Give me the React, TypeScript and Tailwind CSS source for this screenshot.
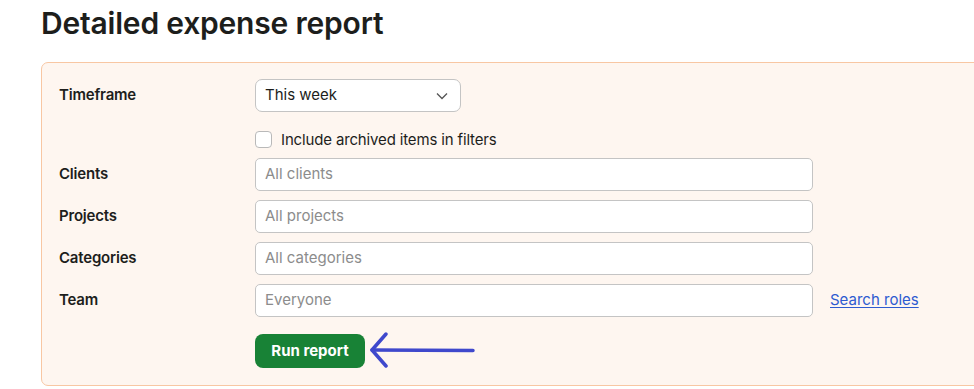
export default function App() {
  const fields = [
    { label: "Clients", placeholder: "All clients" },
    { label: "Projects", placeholder: "All projects" },
    { label: "Categories", placeholder: "All categories" },
    { label: "Team", placeholder: "Everyone", link: "Search roles" },
  ];

  return (
    <div
      className="min-h-[389px] bg-white pl-[41px] text-[#1d1e1c] overflow-hidden"
      style={{ fontFamily: "Inter, 'Noto Sans', sans-serif" }}
    >
      <h1 className="pt-[5px] text-[30px] leading-[36px] font-semibold tracking-[-0.2px]">
        Detailed expense report
      </h1>

      <div className="mt-[21px] w-[1000px] rounded-l-[7px] border border-[#f8c7a3] bg-[#fef6f0] pt-[16px] pb-[15px] pl-[17px]">
        {/* Timeframe */}
        <div className="flex items-center">
          <div className="w-[196px] text-[15px] font-semibold tracking-[-0.2px]">Timeframe</div>
          <button className="flex h-[33px] w-[206px] items-center justify-between rounded-[7px] border border-[#c4c4c4] bg-white pl-[9px] pr-[12px] text-[15px]">
            <span>This week</span>
            <svg width="12" height="8" viewBox="0 0 12 8" fill="none">
              <path d="M1 1.5l5 5 5-5" stroke="#555" strokeWidth="1.3" />
            </svg>
          </button>
        </div>

        {/* Archived checkbox */}
        <div className="mt-[19px] flex items-center pl-[196px]">
          <span className="h-[17px] w-[17px] rounded-[4px] border border-[#b9b9b9] bg-white" />
          <span className="ml-[9px] text-[15px] leading-[17px] tracking-[-0.15px]">
            Include archived items in filters
          </span>
        </div>

        {/* Filters */}
        <div className="mt-[10px] flex flex-col gap-[9px]">
          {fields.map((f) => (
            <div key={f.label} className="flex items-center">
              <div className="w-[196px] text-[15px] font-semibold tracking-[-0.2px]">{f.label}</div>
              <div className="flex h-[33px] w-[558px] items-center rounded-[5px] border border-[#c4c4c4] bg-white pl-[9px] text-[15px] text-[#8c8c8c]">
                {f.placeholder}
              </div>
              {f.link && (
                <a className="ml-[17px] text-[15px] text-[#2e5bd0] underline underline-offset-2">
                  {f.link}
                </a>
              )}
            </div>
          ))}
        </div>

        {/* Run */}
        <div className="mt-[15px] flex items-center pl-[196px]">
          <button className="h-[34px] w-[110px] rounded-[8px] bg-[#188236] text-[15px] font-bold text-white">
            Run report
          </button>
          <svg width="110" height="38" viewBox="0 0 110 38" fill="none" className="ml-[3px]">
            <path
              d="M4 18 L105 18.5"
              stroke="#3f48cc"
              strokeWidth="3.5"
              strokeLinecap="round"
            />
            <path
              d="M18 2 L4 18 L18 34"
              stroke="#3f48cc"
              strokeWidth="3.5"
              strokeLinecap="round"
              strokeLinejoin="round"
            />
          </svg>
        </div>
      </div>
    </div>
  );
}
